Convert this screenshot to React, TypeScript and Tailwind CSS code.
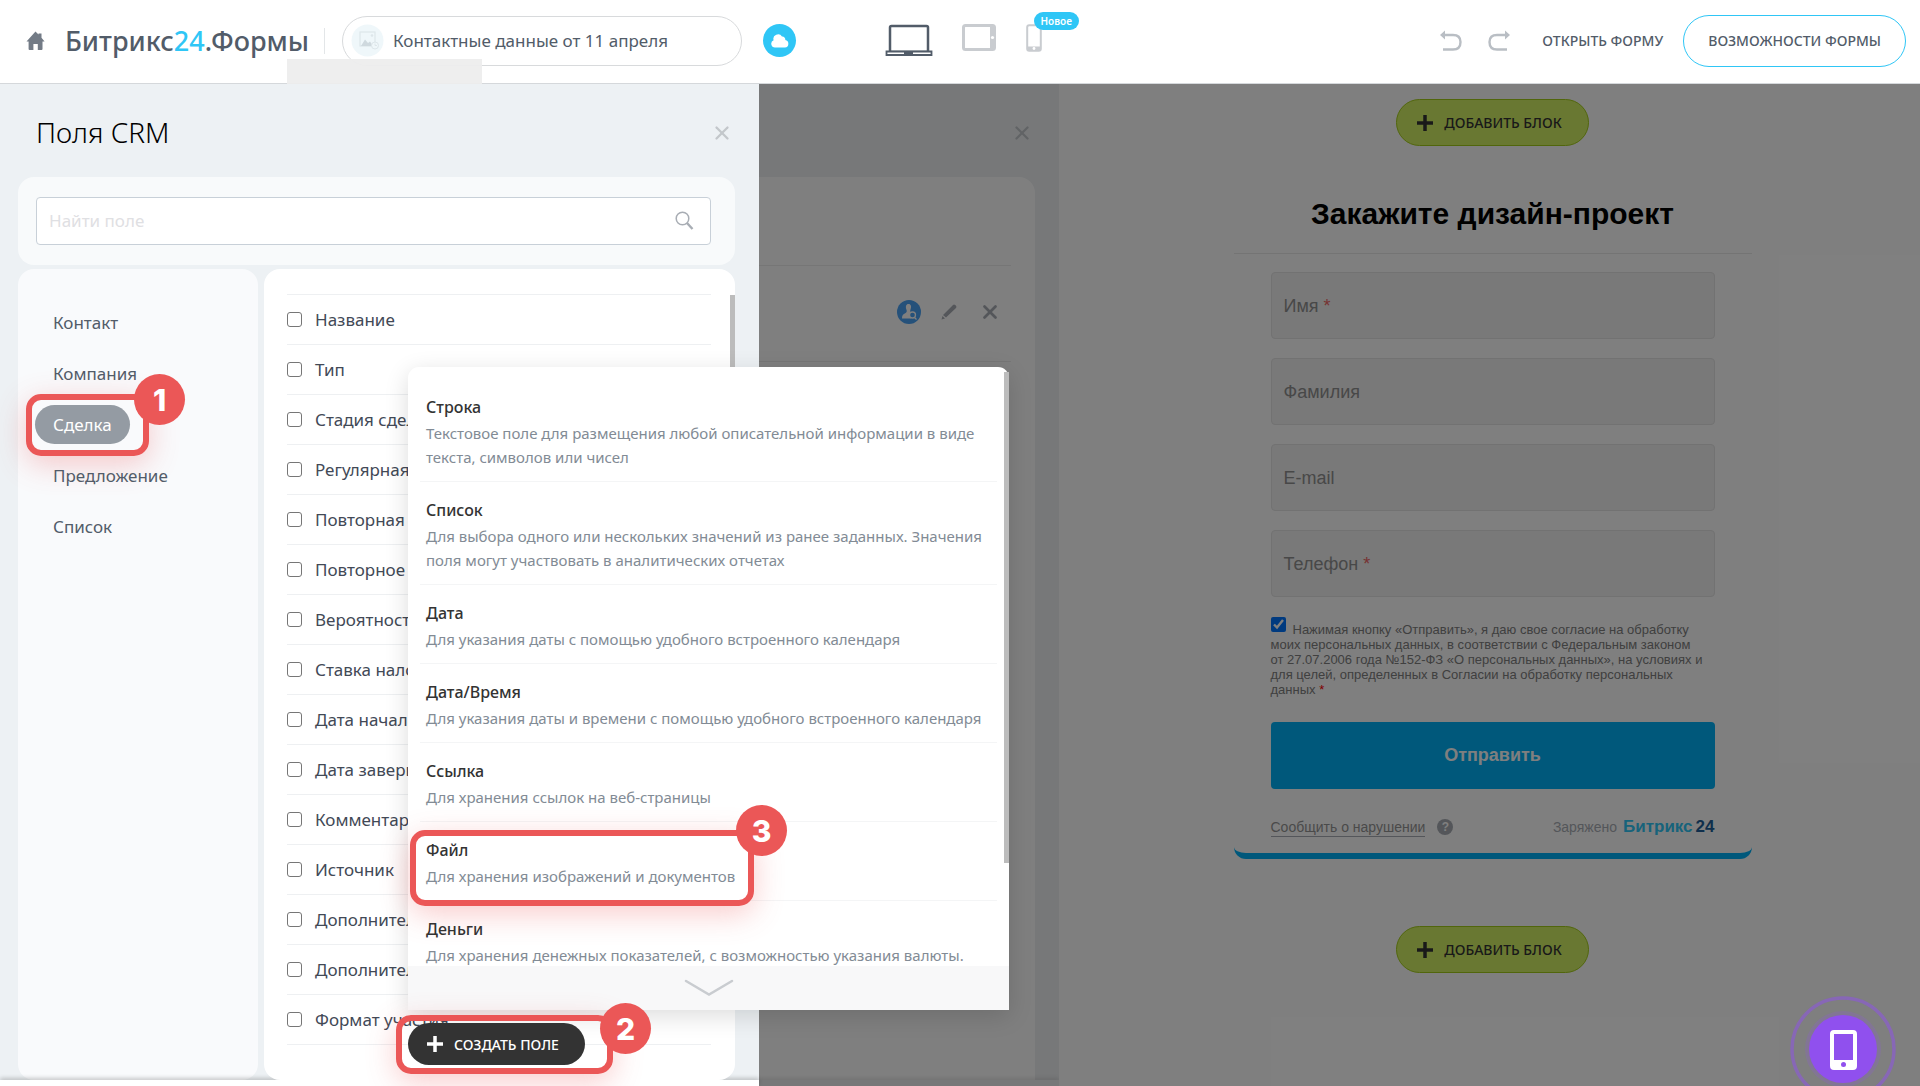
import { X } from "lucide-react";

const entities = ["Контакт", "Компания", "Сделка", "Предложение", "Список"];

const crmFields = [
  "Название",
  "Тип",
  "Стадия сделки",
  "Регулярная сделка",
  "Повторная сделка",
  "Повторное обращение",
  "Вероятность",
  "Ставка налога",
  "Дата начала",
  "Дата завершения",
  "Комментарий",
  "Источник",
  "Дополнительно",
  "Дополнительно об источнике",
  "Формат участия",
];

const fieldTypes = [
  { title: "Строка", text: "Текстовое поле для размещения любой описательной информации в виде текста, символов или чисел" },
  { title: "Список", text: "Для выбора одного или нескольких значений из ранее заданных. Значения поля могут участвовать в аналитических отчетах" },
  { title: "Дата", text: "Для указания даты с помощью удобного встроенного календаря" },
  { title: "Дата/Время", text: "Для указания даты и времени с помощью удобного встроенного календаря" },
  { title: "Ссылка", text: "Для хранения ссылок на веб-страницы" },
  { title: "Файл", text: "Для хранения изображений и документов" },
  { title: "Деньги", text: "Для хранения денежных показателей, с возможностью указания валюты." },
];

const formFields = [
  { label: "Имя", required: true },
  { label: "Фамилия", required: false },
  { label: "E-mail", required: false },
  { label: "Телефон", required: true },
];

function StepBadge({ n }: { n: number }) {
  return (
    <span className="flex size-[51px] items-center justify-center rounded-full bg-[#eb5757] font-['Inter'] text-[30px] leading-none font-extrabold text-white">
      {n}
    </span>
  );
}

function Header() {
  return (
    <header className="flex h-[84px] items-center border-b border-[#d5d8db] bg-white pb-[2px]">
      <div className="relative flex flex-1 items-center">
        <a href="#" aria-label="Главная" className="ml-[26px]">
          <svg width="19" height="20" viewBox="0 0 19 20" fill="#737b86">
            <path d="M9.5 0.5 L12.5 3.6 V2.6 H15.5 V6.8 L18.6 10.4 H16.5 V18 Q16.5 19 15.5 19 H11.8 V13 H7.4 V19 H3.6 Q2.6 19 2.6 18 V10.4 H0.5 Z" />
          </svg>
        </a>
        <span className="mt-px ml-[20px] w-[241px] text-[27px] leading-[40px] font-medium whitespace-nowrap text-[#525c69]">
          Битрикс<span className="text-[#2fc6f6]">24</span>.Формы
        </span>
        <span className="ml-[18px] h-[26px] w-px bg-[#e3e6e8]" />
        <label className="ml-[17px] flex h-[50px] w-[400px] items-center rounded-full border border-[#d8dadc] pl-2">
          <svg width="33" height="33" viewBox="0 0 33 33" fill="none">
            <circle cx="16.5" cy="16.5" r="16" fill="#eff7fa" />
            <rect x="9" y="8" width="15" height="14" stroke="#dde6ea" strokeWidth="1.2" />
            <path d="M10 22 L14 15.500 L17 19 L19 17.500 L22 22 Z" fill="#cfd9de" />
            <circle cx="21" cy="11.500" r="1.300" fill="#dde6ea" />
            <circle cx="24" cy="21.500" r="3.500" fill="#eff7fa" stroke="#dde6ea" />
            <path d="M24 19.500 V21.500 H26" stroke="#dde6ea" />
          </svg>
          <input
            aria-label="Название формы"
            defaultValue="Контактные данные от 11 апреля"
            className="ml-[9px] w-[320px] bg-transparent text-[17px] text-[#525c69] outline-none"
          />
        </label>
        <button aria-label="Облако" className="ml-[21px] flex size-[33px] items-center justify-center rounded-full bg-[#2fc6f6]">
          <svg width="18" height="14" viewBox="0 0 18 14" fill="#fff">
            <path d="M4 13.500 A3.800 3.800 0 0 1 2.600 6.200 A4.600 4.600 0 0 1 11 2.600 A3 3 0 0 1 14.300 6 A3.800 3.800 0 0 1 14 13.500 Z" />
          </svg>
        </button>
        <span className="absolute top-[43px] left-[287px] h-[25px] w-[195px] bg-[#ededed]/95" />
      </div>

      <div className="flex items-start pl-5">
        <button aria-label="Компьютер">
          <svg width="48" height="33" viewBox="0 0 48 33" fill="none" stroke="#525c69">
            <rect x="5" y="2" width="38" height="26" rx="1.500" strokeWidth="2.500" />
            <path d="M1.500 27.500 H46.500 V31 H1.500 Z" fill="#fff" strokeWidth="1.800" />
            <path d="M19 29 H28" strokeWidth="2" />
          </svg>
        </button>
        <button aria-label="Планшет" className="ml-[29px]">
          <svg width="34" height="27" viewBox="0 0 34 27" fill="none">
            <rect x="1.500" y="1.500" width="31" height="24" rx="2" stroke="#c9ccd0" strokeWidth="3" />
            <rect x="28" y="2" width="4" height="23" fill="#c9ccd0" />
            <circle cx="30.500" cy="13.500" r="1.600" fill="#fff" />
          </svg>
        </button>
        <button aria-label="Телефон" className="relative ml-[30px]">
          <svg width="16" height="28" viewBox="0 0 16 28" fill="none">
            <rect x="1.200" y="1.200" width="13.600" height="25.500" rx="2" stroke="#c9ccd0" strokeWidth="2" />
            <rect x="2" y="22.500" width="12" height="4" fill="#c9ccd0" />
            <circle cx="8" cy="24.500" r="1.400" fill="#fff" />
          </svg>
          <span className="absolute -top-3 left-2 flex h-[18px] items-center rounded-full bg-[#2fc6f6] px-[7px] text-[10px] font-semibold text-white">
            Новое
          </span>
        </button>
      </div>

      <div className="flex flex-1 items-center justify-end pr-3.5">
        <button aria-label="Отменить">
          <svg width="22" height="21" viewBox="0 0 22 21" fill="none">
            <path d="M4 5 H13 Q20.500 5 20.500 12 Q20.500 19.500 13 19.500 H3" stroke="#b9bec4" strokeWidth="2.400" />
            <path d="M0 5 L5 0.500 V9.500 Z" fill="#b9bec4" />
          </svg>
        </button>
        <button aria-label="Повторить" className="ml-[26px]">
          <svg width="22" height="21" viewBox="0 0 22 21" fill="none">
            <path d="M18 5 H9 Q1.500 5 1.500 12 Q1.500 19.500 9 19.500 H19" stroke="#b9bec4" strokeWidth="2.400" />
            <path d="M22 5 L17 0.500 V9.500 Z" fill="#b9bec4" />
          </svg>
        </button>
        <button className="ml-8 text-[14px] font-medium text-[#525c69]">ОТКРЫТЬ ФОРМУ</button>
        <button className="ml-5 h-[52px] rounded-full border border-[#2fc6f6] px-6 text-[14px] font-medium text-[#525c69]">
          ВОЗМОЖНОСТИ ФОРМЫ
        </button>
      </div>
    </header>
  );
}

function TypeMenu() {
  return (
    <div className="absolute top-[283px] left-[408px] z-20 w-[601px] rounded-t-[11px] bg-white pt-3 shadow-[0_6px_24px_rgba(0,0,0,0.14)]">
      <ul>
        {fieldTypes.map((t) => (
          <li key={t.title} className="relative mx-3 border-b border-[#f4f5f6] px-1.5 pt-4 pb-3">
            <button className="block w-full text-left">
              <span className="block text-[16px] leading-6 font-medium text-[#333]">{t.title}</span>
              <span className="mt-[2px] block text-[15px] leading-6 text-[#828b95]">{t.text}</span>
            </button>
            {t.title === "Файл" && (
              <span className="pointer-events-none absolute top-[8px] -left-[10px] h-[76px] w-[344px] rounded-[15px] border-6 border-[#eb5757] shadow-[0_8px_30px_rgba(235,87,87,0.3)]">
                <span className="absolute -top-[31px] -right-[39px]">
                  <StepBadge n={3} />
                </span>
              </span>
            )}
          </li>
        ))}
      </ul>
      <div className="relative -mt-[14px] flex h-[44px] items-center justify-center bg-[#f8f8f9]">
        <svg width="50" height="18" viewBox="0 0 50 18" fill="none" stroke="#c9ccd0" strokeWidth="2.500" strokeLinecap="round">
          <path d="M2 2 L25 15.500 L48 2" />
        </svg>
      </div>
      <span className="absolute top-[5px] right-0 h-[491px] w-[5px] bg-[#bcbcbc]" />
    </div>
  );
}

function CrmPanel() {
  return (
    <section className="relative z-10 flex w-[759px] shrink-0 flex-col bg-[#edf1f4]">
      <div className="flex items-start justify-between pt-[26px] pr-[26px] pl-9">
        <h1 className="text-[28px] leading-[44px] font-light text-black">Поля CRM</h1>
        <button aria-label="Закрыть" className="mt-3 text-[#c3c7cb]">
          <X size={22} strokeWidth={2.5} />
        </button>
      </div>
      <div className="mt-[23px] mr-6 ml-[18px] rounded-2xl bg-[#f8fafb] py-5 pr-6 pl-[18px]">
        <label className="flex h-[48px] items-center rounded-[4px] border border-[#c8d0d8] bg-white pr-4 pl-3">
          <input
            aria-label="Найти поле"
            placeholder="Найти поле"
            className="flex-1 text-[17px] text-[#525c69] outline-none placeholder:text-[#dfe0e3]"
          />
          <svg width="19" height="20" viewBox="0 0 19 20" fill="none" stroke="#a8adb4">
            <circle cx="7.500" cy="7.500" r="6.300" strokeWidth="1.500" />
            <path d="M12 12 L17.500 18" strokeWidth="2.400" />
          </svg>
        </label>
      </div>
      <div className="mt-1 mr-6 ml-[18px] flex flex-1 gap-1.5">
        <nav className="w-[240px] rounded-2xl bg-[#f9fafc] pt-[34px] pl-[17px]">
          <ul className="flex flex-col gap-3">
            {entities.map((e) => (
              <li key={e} className="relative flex">
                <button
                  className={
                    e === "Сделка"
                      ? "h-[39px] rounded-full bg-[#949ba3] px-[18px] text-[17px] text-white"
                      : "h-[39px] px-[18px] text-[17px] text-[#525c69]"
                  }
                >
                  {e}
                </button>
                {e === "Сделка" && (
                  <span className="pointer-events-none absolute -top-[11px] -left-[9px] h-[62px] w-[123px] rounded-[15px] border-6 border-[#eb5757] shadow-[0_8px_30px_rgba(235,87,87,0.3)]">
                    <span className="absolute -top-[26px] -right-[42px]">
                      <StepBadge n={1} />
                    </span>
                  </span>
                )}
              </li>
            ))}
          </ul>
        </nav>
        <div className="relative flex-1 rounded-2xl bg-white pt-[25px] pr-6 pl-[23px]">
          <ul className="border-t border-[#eef0f2]">
            {crmFields.map((f) => (
              <li key={f} className="h-[50px] border-b border-[#eef0f2]">
                <label className="flex h-full items-center text-[17px] text-[#424956]">
                  <input
                    type="checkbox"
                    className="mr-[13px] size-[15px] shrink-0 appearance-none rounded-[3px] border border-[#767676] bg-white"
                  />
                  {f}
                </label>
              </li>
            ))}
          </ul>
          <span className="absolute top-[26px] right-0 h-[160px] w-[5px] bg-[#bcbcbc]" />
          <div className="absolute bottom-[15px] left-[144px] z-30">
            <button className="flex h-[42px] items-center rounded-full bg-[#333] pr-[26px] pl-[19px] text-[14px] font-medium text-white">
              <svg width="16" height="16" viewBox="0 0 16 16" stroke="#fff" strokeWidth="3.500" className="mr-[11px]">
                <path d="M8 0 V16 M0 8 H16" />
              </svg>
              СОЗДАТЬ ПОЛЕ
            </button>
            <span className="pointer-events-none absolute -top-[8px] -left-[12px] h-[59px] w-[217px] rounded-[15px] border-6 border-[#eb5757] shadow-[0_8px_30px_rgba(235,87,87,0.3)]">
              <span className="absolute -top-[18px] -right-[44px]">
                <StepBadge n={2} />
              </span>
            </span>
          </div>
        </div>
      </div>
      <div className="h-[6px] bg-white shadow-[0_-2px_4px_rgba(0,0,0,0.2)]" />
      <TypeMenu />
    </section>
  );
}

function FieldsPanel() {
  return (
    <section className="flex w-[300px] shrink-0 flex-col bg-[#eef0f2]">
      <div className="flex justify-end pt-[38px] pr-[26px]">
        <button aria-label="Закрыть панель" className="text-[#c3c7cb]">
          <X size={22} strokeWidth={2.5} />
        </button>
      </div>
      <div className="mt-[33px] mr-6 flex-1 rounded-tr-2xl bg-white pt-[88px] pr-6">
        <div className="flex h-[97px] items-center justify-end border-y border-[#ececec] pb-[3px]">
          <svg width="24" height="24" viewBox="0 0 24 24">
            <circle cx="12" cy="12" r="12" fill="#4aa3f5" />
            <path d="M11.500 4 C14 4 14.500 6.500 13.800 8.500 C13.200 10.500 13 11.500 13.500 12 L14 12.500 V18.500 H5 C5 15.200 6 14.200 8.600 13 C10 12.300 10 11 9.200 9 C8.500 6.500 9 4 11.500 4 Z" fill="#fff" />
            <circle cx="15.500" cy="15" r="3" fill="#4aa3f5" stroke="#fff" strokeWidth="1.300" />
            <path d="M17.500 17.500 L19.500 19.500" stroke="#fff" strokeWidth="1.300" />
          </svg>
          <button aria-label="Изменить" className="ml-5">
            <svg width="16" height="16" viewBox="0 0 16 16" fill="#a8adb4">
              <path d="M12 1 Q13 0 14.200 1 L15 1.800 Q16 3 15 4 L5 13.500 L2 11 Z M1.500 12 L4 14.500 L0.500 15.500 Z" />
            </svg>
          </button>
          <button aria-label="Удалить" className="mr-[10px] ml-[22px] text-[#a8adb4]">
            <X size={22} strokeWidth={3} />
          </button>
        </div>
      </div>
      <div className="h-[6px] shadow-[0_-2px_4px_rgba(0,0,0,0.1)]" />
    </section>
  );
}

function AddBlock() {
  return (
    <button className="flex h-[47px] items-center rounded-full border border-[#a3cd19] bg-[#d3f065] pr-[26px] pl-5 font-['Noto_Sans',sans-serif] text-[14px] font-medium text-[#333]">
      <svg width="16" height="16" viewBox="0 0 16 16" stroke="#333" strokeWidth="3.500" className="mr-[11px]">
        <path d="M8 0 V16 M0 8 H16" />
      </svg>
      ДОБАВИТЬ БЛОК
    </button>
  );
}

function Preview() {
  return (
    <section className="flex flex-1 flex-col items-center bg-white pt-[15px] pl-[6px] font-['Liberation_Sans',Arial,sans-serif]">
      <AddBlock />
      <form className="mt-[43px] w-[518px] rounded-b-[12px] border-b-6 border-[#00b0f6] pb-4">
        <h2 className="h-[65px] border-b border-[#e9e9e9] text-center text-[30px] leading-[50px] font-bold text-black">
          Закажите дизайн-проект
        </h2>
        <div className="px-[37px] pt-[18px]">
          <div className="flex flex-col gap-[19px]">
            {formFields.map((f) => (
              <div key={f.label} className="relative h-[67px]">
                <input id={f.label} className="size-full rounded-[4px] border border-[#e4e4e4] bg-[#f2f2f2] px-3 text-[18px]" />
                <label htmlFor={f.label} className="absolute inset-y-0 left-[13px] flex items-center pt-[2px] text-[18px] text-[#909090]">
                  {f.label}
                  {f.required && <span className="ml-[5px] text-[#e66]">*</span>}
                </label>
              </div>
            ))}
          </div>
          <label className="mt-[20px] block text-[13px] leading-[15px] text-[#808080]">
            <input type="checkbox" defaultChecked className="mr-[7px] size-[15px] align-[2px] accent-[#0075ff]" />
            Нажимая кнопку «Отправить», я даю свое согласие на обработку
            <br />
            моих персональных данных, в соответствии с Федеральным законом
            <br />
            от 27.07.2006 года №152-ФЗ «О персональных данных», на условиях и
            <br />
            для целей, определенных в Согласии на обработку персональных
            <br />
            данных <span className="text-[#f00]">*</span>
          </label>
          <button type="button" className="mt-[25px] h-[67px] w-full rounded-[4px] bg-[#00b0f6] text-[18px] font-bold text-white">
            Отправить
          </button>
          <div className="mt-[28px] flex h-[20px] items-center text-[14px] text-[#a8adb4]">
            <a href="#" className="border-b border-[#a8adb4] leading-[18px] text-[#949494]">
              Сообщить о нарушении
            </a>
            <span className="ml-3 flex size-4 items-center justify-center rounded-full bg-[#a8adb4] text-[12px] font-bold text-white">?</span>
            <span className="ml-auto">Заряжено</span>
            <span className="ml-1.5 text-[17px] font-bold text-[#2fc6f6]">Битрикс</span>
            <span className="ml-[3px] text-[17px] font-bold text-[#215f98]">24</span>
          </div>
        </div>
      </form>
      <div className="mt-[67px]">
        <AddBlock />
      </div>
    </section>
  );
}

export default function App() {
  return (
    <div className="flex min-h-screen flex-col overflow-hidden bg-white font-['Noto_Sans',sans-serif]">
      <Header />
      <main className="relative flex flex-1">
        <CrmPanel />
        <FieldsPanel />
        <Preview />
        <div className="pointer-events-none absolute inset-y-0 right-0 left-[759px] bg-black/50" />
        <button aria-label="Мобильное приложение" className="absolute right-[24px] -bottom-[16px]">
          <svg width="106" height="106" viewBox="0 0 106 106" fill="none">
            <circle cx="53" cy="53" r="51" stroke="#9050ee" strokeOpacity="0.5" strokeWidth="3.500" />
            <circle cx="53" cy="53" r="38" fill="#9050ee" fillOpacity="0.2" />
            <circle cx="53" cy="53" r="34" fill="#9050ee" />
            <rect x="42" y="36" width="23" height="36" rx="2" stroke="#fff" strokeWidth="4" />
            <rect x="42" y="64" width="23" height="8" fill="#fff" />
            <circle cx="53.500" cy="68.500" r="2.500" fill="#9050ee" />
          </svg>
        </button>
      </main>
    </div>
  );
}
